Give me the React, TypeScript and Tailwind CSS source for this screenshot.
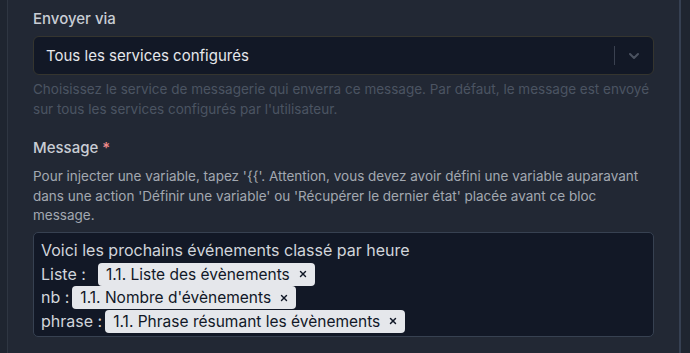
import { ChevronDown, X } from "lucide-react";

interface Line {
  label: string;
  tag?: string;
  gap?: string;
}

const lines: Line[] = [
  { label: "Voici les prochains événements classé par heure" },
  { label: "Liste :", tag: "1.1. Liste des évènements", gap: "ml-[12px]" },
  { label: "nb :", tag: "1.1. Nombre d'évènements", gap: "ml-[3px]" },
  { label: "phrase :", tag: "1.1. Phrase résumant les évènements", gap: "ml-[3px]" },
];

const hint =
  "Pour injecter une variable, tapez '{{'. Attention, vous devez avoir défini une variable auparavant dans une action 'Définir une variable' ou 'Récupérer le dernier état' placée avant ce bloc message.";

function Tag({ text }: { text: string }) {
  return (
    <span className="inline-flex items-center h-[23px] pl-[8px] pr-[7px] rounded-[4px] bg-[#e5e7eb] text-[#111827] text-[15.5px]">
      {text}
      <X className="ml-[8px] w-[10px] h-[10px]" strokeWidth={3.5} />
    </span>
  );
}

export default function App() {
  return (
    <div className="h-[353px] w-[690px] bg-[#1f2530] font-['Inter',sans-serif] overflow-hidden">
      <div className="ml-[7px] w-[674px] h-full border-l border-l-[#2f3642] border-r-2 border-r-[#364052] bg-[#222834] pl-[25px] pr-[25px]">
        {/* Envoyer via */}
        <div className="pt-[9px] text-[15px] leading-[20px] font-medium text-[#c9cdd4]">Envoyer via</div>
        <div className="mt-[7px] h-[39px] w-[621px] flex items-center rounded-[6px] border border-[#35352f] bg-[#121826]">
          <span className="flex-1 pl-[12px] pt-[2px] text-[15px] text-[#e5e7eb]">Tous les services configurés</span>
          <span className="w-px h-[19px] bg-[#3a4150]" />
          <ChevronDown className="mx-[11px] w-[16px] h-[16px] text-[#4b5260]" strokeWidth={3} />
        </div>
        <p className="mt-[5px] text-[13.5px] leading-[19.5px] text-[#4b5462]">
          Choisissez le service de messagerie qui enverra ce message. Par défaut, le message est envoyé sur tous les
          services configurés par l'utilisateur.
        </p>

        {/* Message */}
        <div className="mt-[19px] text-[15px] leading-[20px] font-medium text-[#c9cdd4]">
          Message <span className="text-[#f08a8a]">*</span>
        </div>
        <p className="mt-[9px] text-[13.5px] leading-[19.5px] text-[#a3a8b1]">{hint}</p>
        <div className="mt-[6px] h-[105px] w-[621px] rounded-[5px] border border-[#374151] bg-[#121826] pt-[6px] pl-[7px] text-[16px] text-[#d1d5db]">
          {lines.map((l) => (
            <div key={l.label} className="flex items-center h-[23.5px]">
              <span>{l.label}</span>
              {l.tag && (
                <span className={l.gap}>
                  <Tag text={l.tag} />
                </span>
              )}
            </div>
          ))}
        </div>
      </div>
    </div>
  );
}
